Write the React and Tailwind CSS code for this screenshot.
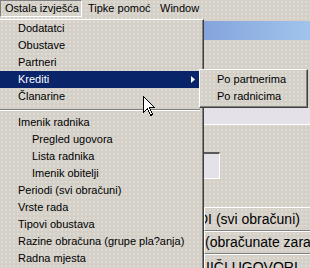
const font = "font-['Liberation_Sans',Arial,sans-serif]";
const dots =
  "bg-[radial-gradient(circle,rgba(255,255,255,0.5)_0.6px,transparent_0.8px)] bg-[length:4px_4px]";

const items = [
  { t: "Dodatatci" },
  { t: "Obustave" },
  { t: "Partneri" },
  { t: "Krediti", active: true, sub: true },
  { t: "Članarine" },
  { sep: true },
  { t: "Imenik radnika" },
  { t: "Pregled ugovora", indent: true },
  { t: "Lista radnika", indent: true },
  { t: "Imenik obitelji", indent: true },
  { t: "Periodi (svi obračuni)" },
  { t: "Vrste rada" },
  { t: "Tipovi obustava" },
  { t: "Razine obračuna (grupe pla?anja)" },
  { t: "Radna mjesta" },
];

function MenuRow({ item }) {
  if (item.sep) {
    return (
      <div className="h-[9px] pt-[4px] pr-[2px]">
        <div className="h-[2px] border-t border-b border-t-[#808080] border-b-white" />
      </div>
    );
  }
  return (
    <div
      className={`flex h-[17px] items-center whitespace-nowrap leading-[17px] ${
        item.indent ? "pl-[32px]" : "pl-[18px]"
      } ${item.active ? "bg-[#0a246a] text-white" : "text-black"}`}
    >
      <span>{item.t}</span>
      {item.sub && (
        <svg className="ml-auto mr-[7px]" width="4" height="7" viewBox="0 0 4 7">
          <polygon points="0,0 4,3.5 0,7" fill="white" />
        </svg>
      )}
    </div>
  );
}

function ButtonRow({ children, h, shift }) {
  return (
    <div
      className={`${h} flex items-center overflow-hidden whitespace-nowrap border-t border-b border-l border-t-white border-l-white border-b-[#808080] text-[14px] text-black`}
    >
      <span className={shift}>{children}</span>
    </div>
  );
}

export default function App() {
  return (
    <div
      className={`relative flex h-[268px] w-[310px] flex-col overflow-hidden bg-[#d4d0c8] ${dots} ${font} text-[11px]`}
    >
      {/* menu bar */}
      <div className="flex h-[19px] shrink-0 items-start text-black">
        <div className="h-[17px] w-[82px] border border-t-[#808080] border-l-[#808080] border-r-white border-b-white pl-[4px] leading-[15px]">
          Ostala izvješća
        </div>
        <div className="ml-[6px] w-[72px] leading-[17px]">Tipke pomoć</div>
        <div className="leading-[17px]">Window</div>
      </div>

      {/* window behind the menu */}
      <div className="flex flex-1">
        <div className="w-[204px] shrink-0" />
        <div className="flex flex-1 flex-col">
          <div className="h-[2px]" />
          <div className="h-[19px] bg-[linear-gradient(to_right,#84a4db,#a6caf0)]" />
          <div className="h-[68px]" />
          <div className="mr-[2px] h-[17px] border-r border-b border-white bg-[#e4e2e8]" />
          <div className="h-[27px]" />
          <div className="h-[27px] w-[16px] border-t-2 border-r border-b border-t-[#5a5a5a] border-r-white border-b-white bg-[#e4e2e8]" />
          <div className="h-[28px]" />
          <ButtonRow h="h-[24px]" shift="-ml-[7px]">
            DI (svi obračuni)
          </ButtonRow>
          <ButtonRow h="h-[23px]" shift="ml-0">
            (obračunate zarade)
          </ButtonRow>
          <div className="flex-1 overflow-hidden whitespace-nowrap border-t border-l border-white pt-[4px] pl-[1px] text-[14px] leading-[16px] text-black">
            IIČI UGOVORI
          </div>
        </div>
      </div>

      {/* dropdown menu */}
      <div className={`absolute left-0 top-[19px] h-[249px] w-[204px] border-t border-r border-t-white border-r-[#404040] bg-[#d4d0c8] ${dots}`}>
        <div className="h-full border-r border-[#808080]">
          {items.map((it, i) => (
            <MenuRow key={i} item={it} />
          ))}
        </div>
      </div>

      {/* submenu */}
      <div className={`absolute left-[199px] top-[69px] h-[39px] w-[109px] border border-t-white border-l-white border-r-[#404040] border-b-[#404040] bg-[#d4d0c8] ${dots}`}>
        <div className="h-full border-r border-b border-[#808080] pt-[1px] pl-[17px] text-black">
          <div className="h-[17px] leading-[17px]">Po partnerima</div>
          <div className="h-[17px] leading-[17px]">Po radnicima</div>
        </div>
      </div>

      {/* mouse pointer */}
      <svg
        className="absolute left-[143px] top-[96px]"
        width="12"
        height="21"
        viewBox="0 0 12 21"
        shapeRendering="crispEdges"
      >
        <path
          d="M0.5 0.5 L0.5 16.5 L4.5 12.5 L7.5 19.5 L9.5 18.5 L6.5 11.5 L11.5 11.5 Z"
          fill="white"
          stroke="black"
          strokeWidth="1"
        />
      </svg>
    </div>
  );
}
